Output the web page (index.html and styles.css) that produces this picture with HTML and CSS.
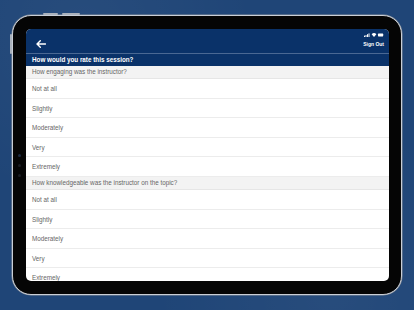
FILE: index.html
```html
<!DOCTYPE html>
<html>
<head>
    <meta charset="UTF-8">
    <title>Rate Session</title>
    <link rel="stylesheet" href="styles.css">
</head>
<body>
    <div class="tablet">
        <span class="hw-btn top-a"></span>
        <span class="hw-btn top-b"></span>
        <span class="hw-btn side"></span>
        <div class="cam">
            <span></span><span></span><span></span>
        </div>
        <div class="screen">
            <div class="app-header">
                <svg class="back" width="10" height="8" viewBox="0 0 10 8">
                    <path d="M9.5 4H1.2M4.3 0.8L1 4l3.3 3.2" fill="none" stroke="#fff" stroke-width="1.4" stroke-linecap="round" stroke-linejoin="round"/>
                </svg>
                <div class="header-right">
                    <div class="status">
                        <svg width="20" height="4" viewBox="0 0 20 4">
                            <rect x="0" y="2.6" width="1" height="1.4" fill="#fff"/>
                            <rect x="1.5" y="2" width="1" height="2" fill="#fff"/>
                            <rect x="3" y="1.2" width="1" height="2.8" fill="#fff"/>
                            <rect x="4.5" y="0.4" width="1" height="3.6" fill="#fff"/>
                            <path d="M7.6 1.2a3.4 3.4 0 0 1 4.8 0L10 4z" fill="#fff"/>
                            <rect x="14" y="0.6" width="5.2" height="2.8" rx="0.6" fill="#fff"/>
                        </svg>
                    </div>
                    <div class="sign-out">Sign Out</div>
                </div>
            </div>
            <div class="section-title">How would you rate this session?</div>

            <div class="question">How engaging was the instructor?</div>
            <div class="option">Not at all</div>
            <div class="option">Slightly</div>
            <div class="option">Moderately</div>
            <div class="option">Very</div>
            <div class="option">Extremely</div>

            <div class="question">How knowledgeable was the instructor on the topic?</div>
            <div class="option">Not at all</div>
            <div class="option">Slightly</div>
            <div class="option">Moderately</div>
            <div class="option">Very</div>
            <div class="option">Extremely</div>
        </div>
    </div>
</body>
</html>
```

FILE: styles.css
```css
body {
    margin: 0;
    width: 414px;
    height: 310px;
    overflow: hidden;
    background-color: #1f4577;
    background-image:
        radial-gradient(circle at 20% 10%, rgba(255, 255, 255, 0.04), transparent 40%),
        radial-gradient(circle at 80% 95%, rgba(255, 255, 255, 0.04), transparent 40%);
    font-family: "Liberation Sans", Arial, sans-serif;
}

.tablet {
    position: relative;
    box-sizing: border-box;
    margin: 15px 0 0 12px;
    width: 390px;
    height: 280px;
    padding: 13px 12px 13px 13px;
    background: #050505;
    border: 1px solid #c9ced6;
    border-radius: 19px;
    box-shadow: 0 0 0 0.5px #8a929c;
}

.hw-btn {
    position: absolute;
    background: #aab2bd;
    border-radius: 1px;
}
.hw-btn.top-a {
    top: -3px;
    left: 30px;
    width: 15px;
    height: 2px;
}
.hw-btn.top-b {
    top: -3px;
    left: 49px;
    width: 18px;
    height: 2px;
}
.hw-btn.side {
    top: 18px;
    left: -3px;
    width: 2px;
    height: 20px;
}

.cam {
    position: absolute;
    left: 5px;
    top: 138px;
    display: flex;
    flex-direction: column;
    gap: 7px;
}
.cam > span {
    width: 3px;
    height: 3px;
    border-radius: 50%;
    background: #1b1e24;
}
.cam > span:first-child {
    background: #1d2c44;
}

.screen {
    height: 100%;
    background: #fff;
    border-radius: 5px;
    overflow: hidden;
}

.app-header {
    height: 24px;
    background: #0a3269;
    border-bottom: 1px solid #4a6893;
    display: flex;
    align-items: center;
    justify-content: space-between;
    padding: 0 5px 0 10px;
}
.back {
    display: block;
    margin-top: 5px;
}
.header-right {
    display: flex;
    flex-direction: column;
    align-items: flex-end;
    gap: 4px;
    margin-top: -2px;
}
.status svg {
    display: block;
}
.sign-out {
    color: #fff;
    font-size: 5px;
    font-weight: bold;
}

.section-title {
    height: 12px;
    line-height: 12px;
    background: #0a3269;
    color: #fff;
    font-size: 6.3px;
    font-weight: bold;
    padding-left: 6px;
}

.question {
    height: 12px;
    line-height: 12px;
    background: #f3f3f3;
    border-bottom: 1px solid #e6e6e6;
    color: #666;
    font-size: 6.3px;
    padding-left: 6px;
}

.option {
    box-sizing: border-box;
    height: 19.6px;
    line-height: 19px;
    border-bottom: 1px solid #ececec;
    color: #666;
    font-size: 6.3px;
    padding-left: 6px;
}
```
